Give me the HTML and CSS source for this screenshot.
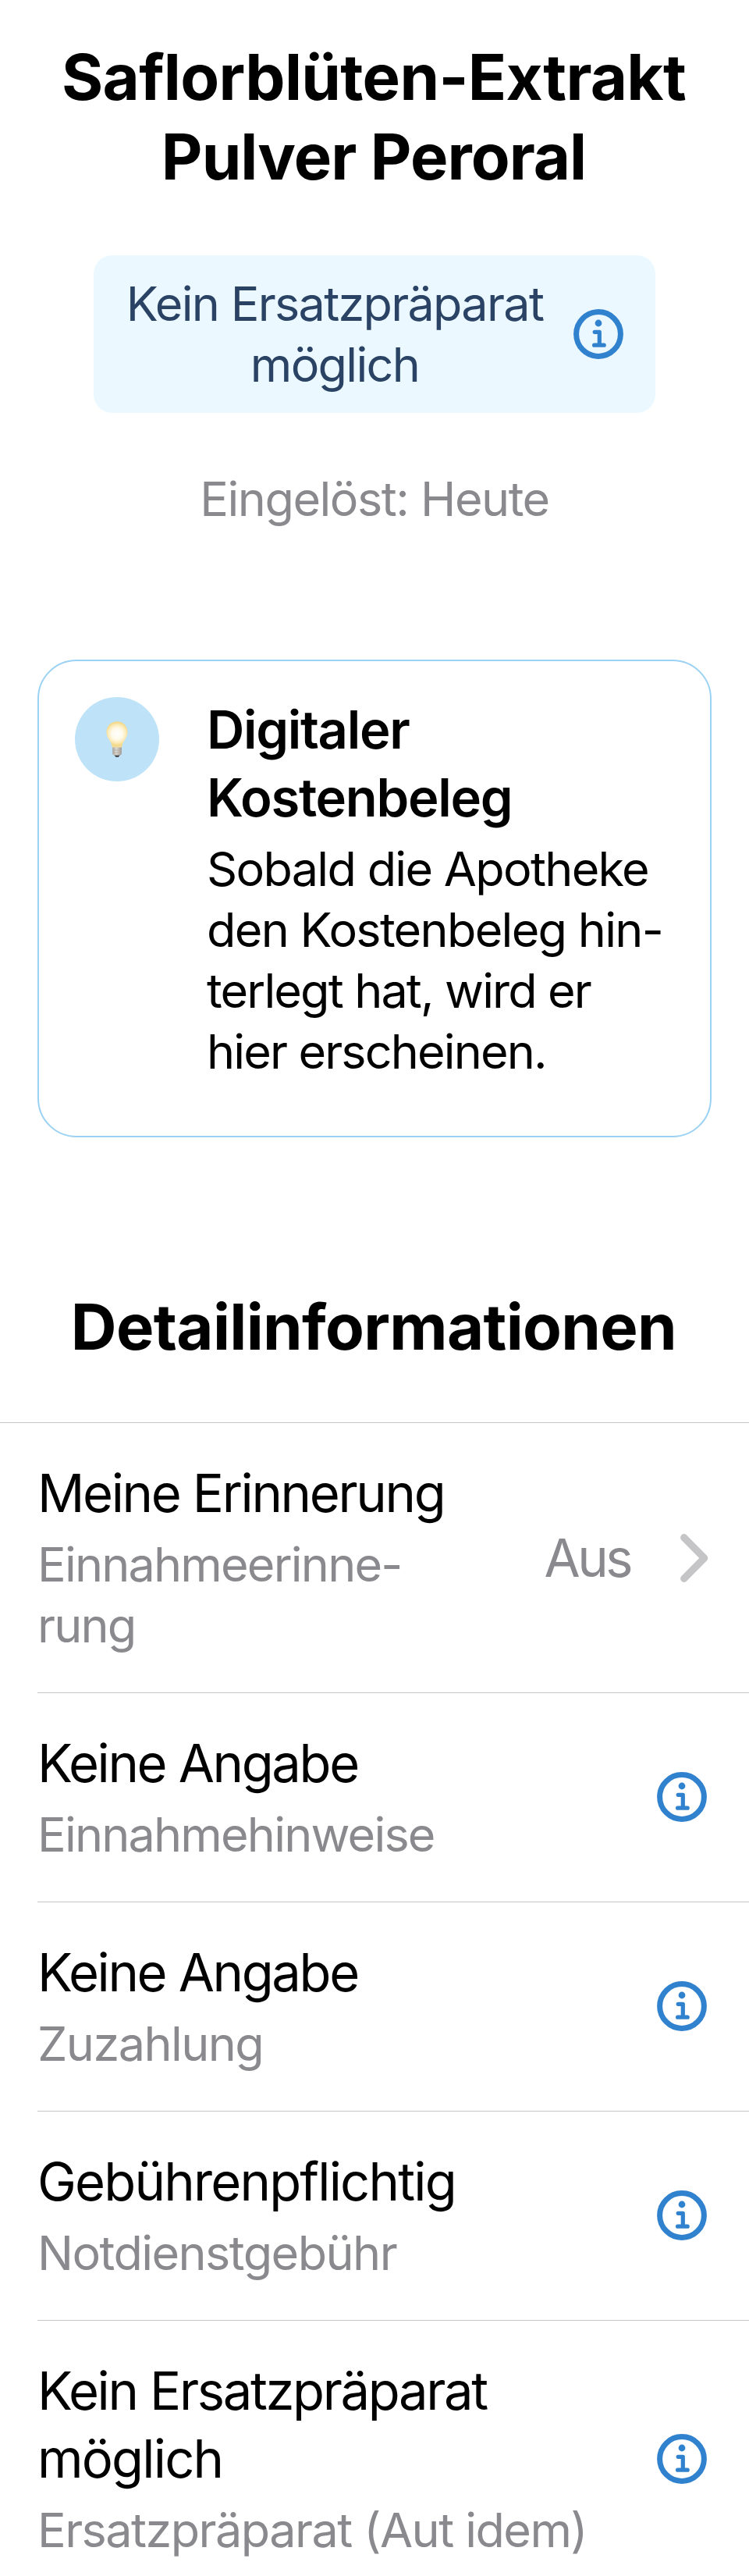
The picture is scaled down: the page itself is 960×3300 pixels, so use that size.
FILE: index.html
```
<!DOCTYPE html>
<html lang="de">
<head>
<meta charset="utf-8">
<title>Saflorblüten-Extrakt Pulver Peroral</title>
<link rel="stylesheet" href="styles.css">
</head>
<body>
<svg class="defs" aria-hidden="true">
  <symbol id="info" viewBox="0 0 64 64">
    <circle cx="32" cy="32" r="28.4" fill="none" stroke="currentColor" stroke-width="7"/>
    <circle cx="32" cy="18" r="4.4" fill="currentColor"/>
    <path d="M27.2 29.3H33.3V46.2M26.6 46.2H39.2" fill="none" stroke="currentColor" stroke-width="5.2" stroke-linecap="round" stroke-linejoin="round"/>
  </symbol>
</svg>
<main class="page">
  <h1 class="title">Saflorblüten-Extrakt<br><span class="title-tight">Pulver Peroral</span></h1>
  <div class="badge">
    <span class="badge-text">Kein Ersatzpräparat<br>möglich</span>
    <svg class="info"><use href="#info"/></svg>
  </div>
  <p class="redeemed">Eingelöst: Heute</p>

  <section class="card">
    <div class="card-icon">
      <svg class="bulb" viewBox="0 0 28 46">
        <defs>
          <radialGradient id="glass" gradientUnits="userSpaceOnUse" cx="14" cy="16" r="17">
            <stop offset="0" stop-color="#fffefb"/>
            <stop offset="0.4" stop-color="#fffaec"/>
            <stop offset="0.7" stop-color="#fbeab5"/>
            <stop offset="0.85" stop-color="#f3d98b"/>
            <stop offset="1" stop-color="#f2da97"/>
          </radialGradient>
          <linearGradient id="socket">
            <stop offset="0" stop-color="#a79e95"/>
            <stop offset="0.4" stop-color="#dedad5"/>
            <stop offset="1" stop-color="#9f9891"/>
          </linearGradient>
        </defs>
        <path d="M14 0.3C6.4 0.3 0.4 6.5 0.4 14C0.4 22 7.6 25.5 7.9 33.8H20.1C20.4 25.5 27.6 22 27.6 14C27.6 6.5 21.6 0.3 14 0.3Z" fill="url(#glass)"/>
        <path d="M8.3 33.6H19.9V42L17.5 44H10.7L8.3 42Z" fill="url(#socket)"/>
        <path d="M8.3 37H19.9M8.3 40.3H19.9" stroke="#b5aea7" stroke-width="0.8"/>
        <path d="M10.7 43.5H17.5L15.8 46H12.4Z" fill="#4a4b4d"/>
      </svg>
    </div>
    <div class="card-copy">
      <h2 class="card-title">Digitaler<br>Kostenbeleg</h2>
      <p class="card-text">Sobald die Apotheke<br>den Kostenbeleg hin-<br><span class="card-text-tight">terlegt hat, wird er<br>hier erscheinen.</span></p>
    </div>
  </section>

  <h2 class="section-title">Detailinformationen</h2>
  <ul class="list">
    <li class="row">
      <div class="copy"><p class="label">Meine Erinnerung</p><p class="sub">Einnahmeerinne-<br>rung</p></div>
      <span class="value">Aus</span>
      <svg class="chevron" viewBox="0 0 36 62"><path d="M4.7 4.7L30.7 31L4.7 57.3" fill="none" stroke="currentColor" stroke-width="9.2" stroke-linecap="round" stroke-linejoin="round"/></svg>
    </li>
    <li class="row">
      <div class="copy"><p class="label">Keine Angabe</p><p class="sub">Einnahmehinweise</p></div>
      <svg class="info"><use href="#info"/></svg>
    </li>
    <li class="row">
      <div class="copy"><p class="label">Keine Angabe</p><p class="sub sub-wide">Zuzahlung</p></div>
      <svg class="info"><use href="#info"/></svg>
    </li>
    <li class="row">
      <div class="copy"><p class="label label-wide">Gebührenpflichtig</p><p class="sub sub-wide">Notdienstgebühr</p></div>
      <svg class="info"><use href="#info"/></svg>
    </li>
    <li class="row">
      <div class="copy"><p class="label">Kein Ersatzpräparat<br><span class="label-wide">möglich</span></p><p class="sub sub-wide">Ersatzpräparat (Aut idem)</p></div>
      <svg class="info"><use href="#info"/></svg>
    </li>
  </ul>
</main>
</body>
</html>
```
FILE: styles.css
```
* { box-sizing: border-box; margin: 0; padding: 0; }

body {
  background: #fff;
  color: #000;
  font-family: Inter, "Liberation Sans", sans-serif;
  font-size: 61.1px;
  line-height: 78px;
  letter-spacing: -1.7px;
}

.defs { display: none; }

.page {
  display: flex;
  flex-direction: column;
  width: 960px;
  height: 3300px;
  padding-top: 48px;
  overflow: hidden;
  white-space: nowrap;
}

.page > * { flex-shrink: 0; }

.title,
.section-title {
  padding-right: 2px;
  font-size: 81.4px;
  font-weight: 700;
  line-height: 102px;
  letter-spacing: -0.67px;
  text-align: center;
}

.title-tight { letter-spacing: -0.94px; }

.badge {
  display: flex;
  align-items: center;
  align-self: center;
  gap: 36px;
  width: 720px;
  height: 202px;
  margin-top: 75px;
  padding: 0 41px 0 39px;
  border-radius: 24px;
  background: #ebf8ff;
  color: #2a4365;
}

.badge-text { flex: 1; text-align: center; }

.info {
  flex: none;
  width: 64px;
  height: 64px;
  color: #3182ce;
}

.redeemed {
  margin-top: 71px;
  color: #8a8a8e;
  letter-spacing: -1.5px;
  text-align: center;
}

.card {
  display: flex;
  gap: 61px;
  height: 612px;
  margin: 167px 48px 0;
  padding: 44px 46px;
  border: 2px solid #9bd2f3;
  border-radius: 50px;
}

.card-icon {
  display: flex;
  align-items: center;
  justify-content: center;
  width: 108px;
  height: 108px;
  margin-top: 2px;
  border-radius: 50%;
  background: #bee3f8;
}

.bulb { width: 28px; height: 46px; }

.card-title {
  font-size: 66.9px;
  font-weight: 600;
  line-height: 87px;
  letter-spacing: -1.3px;
}

.card-text { margin-top: 9px; }

.card-text-tight { letter-spacing: -1.86px; }

.section-title { margin-top: 192px; }

.list {
  margin-top: 71px;
  border-top: 1px solid #c6c6c8;
  list-style: none;
}

.row {
  display: flex;
  align-items: center;
  margin-left: 48px;
  padding: 46px 54px 47px 0;
  border-bottom: 1px solid #c6c6c8;
}

.row:last-child { border-bottom: 0; }

.copy { flex: 1; }

.label,
.value {
  font-size: 66.9px;
  line-height: 87px;
  letter-spacing: -2.35px;
}

.label-wide { letter-spacing: -1.8px; }

.sub {
  margin-top: 9px;
  color: #8a8a8e;
  letter-spacing: -1.8px;
}

.sub-wide { letter-spacing: -1.55px; }

.value {
  color: #8a8a8e;
  letter-spacing: -3.5px;
}

.chevron {
  flex: none;
  width: 36px;
  height: 62px;
  margin: 2px -2px 0 64px;
  color: #c5c5c7;
}
```
